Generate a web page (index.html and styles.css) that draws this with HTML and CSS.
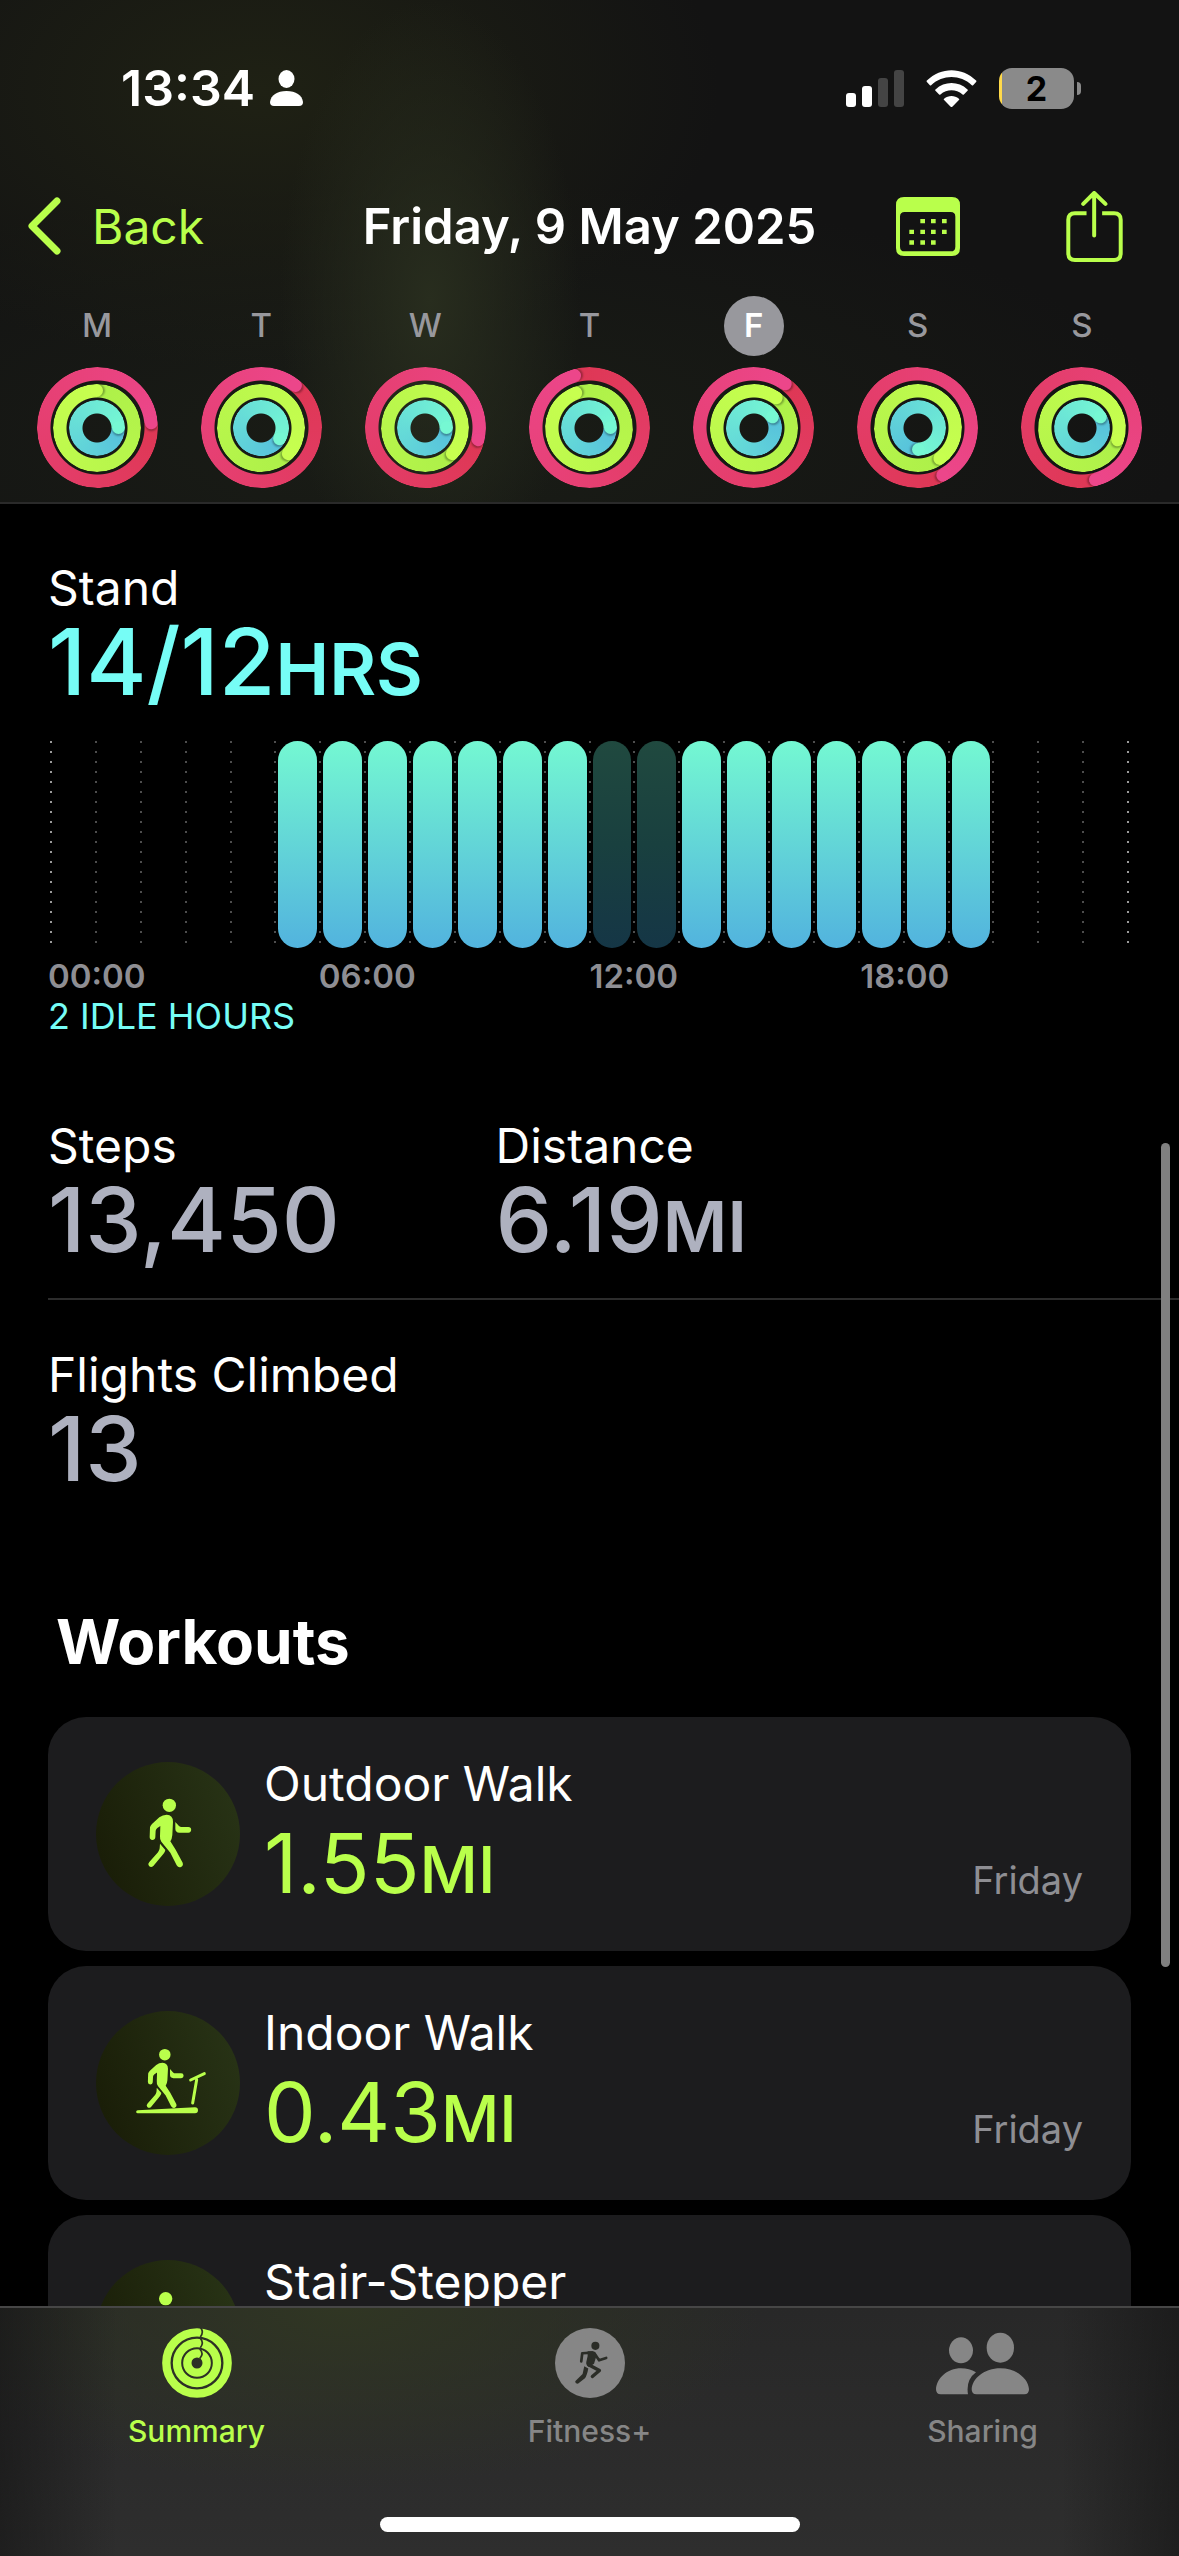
FILE: index.html
```html
<!DOCTYPE html>
<html lang="en-GB">
<head>
<meta charset="utf-8">
<meta name="viewport" content="width=device-width, initial-scale=1">
<title>Activity – Friday, 9 May 2025</title>
<link rel="stylesheet" href="styles.css">
</head>
<body>
<svg class="defs" aria-hidden="true">
  <symbol id="walker" viewBox="48 66 432 432">
    <circle cx="268" cy="196" r="20"/>
    <path d="M210 262Q211 257 216 252L238 232Q248 224 260 224Q279 225 279 245L277 285Q276 297 271 304L287 329L308 368Q311 377 303 381Q295 384 290 376L271 338L244 305Q239 298 240 288L241 258L232 264Q228 267 227 272L226 292Q225 300 217 300Q209 299 209 291Z"/>
    <path d="M240 311L256 330Q255 337 250 342L220 378Q213 384 207 378Q202 372 208 366L234 337Q238 332 239 325Z"/>
    <path d="M286 246L297 258Q300 261 305 261H325A8 8 0 0 1 325 278H298Q286 277 286 266Z"/>
  </symbol>
</svg>
<div class="app">
  <header class="header">
    <div class="status">
      <div class="status-left">
        <time>13:34</time>
        <svg class="person" viewBox="0 0 33 36" aria-hidden="true"><ellipse cx="16.500" cy="9" rx="8" ry="9"/><path d="M0 32C1 25 7 21 16.500 21S32 25 33 32Q33 36 29 36H4Q0 36 0 32Z"/></svg>
      </div>
      <div class="status-right">
        <svg class="signal" viewBox="0 0 58 37" aria-label="Signal: 2 bars"><rect y="23" width="10" height="14" rx="3"/><rect x="16" y="16" width="10" height="21" rx="3"/><g class="off"><rect x="32" y="8" width="10" height="29" rx="3"/><rect x="48" width="10" height="37" rx="3"/></g></svg>
        <svg class="wifi" viewBox="438 86 153 112" aria-label="Wi-Fi"><path d="M440 118C483 76 546 76 589 118Q591 120 589 122L580 132Q578 134 576 132C541 99 488 99 453 132Q451 134 449 132L440 122Q438 120 440 118ZM466 145C494 119 535 119 563 145Q565 147 563 149L552 160Q550 162 548 160C528 143 501 143 481 160Q479 162 477 160L466 149Q464 147 466 145ZM492 173C505 162 524 162 537 173Q539 175 537 177L517 197Q514 199 512 197L492 177Q490 175 492 173Z"/></svg>
        <div class="battery"><span>2</span></div>
      </div>
    </div>
    <nav class="nav">
      <a class="back" href="#summary"><svg class="chevron" viewBox="0 0 34 58" aria-hidden="true"><path d="M29 4L4 29L29 54"/></svg>Back</a>
      <h1>Friday, 9 May 2025</h1>
      <div class="actions">
        <button type="button" aria-label="Calendar"><svg class="calendar" viewBox="348 471 192 177"><path fill-rule="evenodd" d="M372 471H516Q540 471 540 495V624Q540 648 516 648H372Q348 648 348 624V495Q348 471 372 471ZM374 516Q360 516 360 530V620Q360 634 374 634H512Q526 634 526 620V530Q526 516 512 516Z"/><path d="M421 537h14v13h-14zM453 537h14v13h-14zM486 537h14v13h-14zM388 569h14v13h-14zM421 569h14v13h-14zM453 569h14v13h-14zM486 569h14v13h-14zM388 601h14v13h-14zM421 601h14v13h-14zM453 601h14v13h-14z"/></svg></button>
        <button type="button" aria-label="Share"><svg class="share" viewBox="858 449 170 214"><path d="M919 516H884Q864 516 864 536V636Q864 657 884 657H1002Q1022 657 1022 636V536Q1022 516 1002 516H966"/><path class="arrow" d="M942 583V456M909 488L942 455L976 488"/></svg></button>
      </div>
    </nav>
    <ol class="week">
      <li><span class="day">M</span><div class="rings"><i class="ring move" style="--end:85deg"></i><i class="ring exercise" style="--end:0deg"></i><i class="ring stand" style="--end:90deg"></i></div></li>
      <li><span class="day">T</span><div class="rings"><i class="ring move" style="--end:39deg"></i><i class="ring exercise" style="--end:134deg"></i><i class="ring stand" style="--end:121deg"></i></div></li>
      <li><span class="day">W</span><div class="rings"><i class="ring move" style="--end:103deg"></i><i class="ring exercise" style="--end:134deg"></i><i class="ring stand" style="--end:90deg"></i></div></li>
      <li><span class="day">T</span><div class="rings"><i class="ring move" style="--end:344deg"></i><i class="ring exercise" style="--end:340deg"></i><i class="ring stand" style="--end:90deg"></i></div></li>
      <li><span class="day current" aria-current="date">F</span><div class="rings"><i class="ring move" style="--end:36deg"></i><i class="ring exercise" style="--end:37deg"></i><i class="ring stand" style="--end:60deg"></i></div></li>
      <li><span class="day">S</span><div class="rings"><i class="ring move" style="--end:152deg"></i><i class="ring exercise" style="--end:145deg"></i><i class="ring stand" style="--end:180deg"></i></div></li>
      <li><span class="day">S</span><div class="rings"><i class="ring move" style="--end:165deg"></i><i class="ring exercise" style="--end:109deg"></i><i class="ring stand" style="--end:60deg"></i></div></li>
    </ol>
  </header>

  <main class="content">
    <section class="stand-section">
      <h2 class="label">Stand</h2>
      <p class="value cyan">14/12<span class="unit">HRS</span></p>
      <div class="chart" role="img" aria-label="Stand hours through the day">
        <i></i><i></i><i></i><i></i><i></i><i class="on"></i>
        <i class="on"></i><i class="on"></i><i class="on"></i><i class="on"></i><i class="on"></i><i class="on"></i>
        <i class="idle"></i><i class="idle"></i><i class="on"></i><i class="on"></i><i class="on"></i><i class="on"></i>
        <i class="on"></i><i class="on"></i><i class="on"></i><i></i><i></i><i></i>
      </div>
      <div class="hours"><span>00:00</span><span>06:00</span><span>12:00</span><span>18:00</span></div>
      <p class="idle-note">2 IDLE HOURS</p>
    </section>

    <section class="stats">
      <div class="stat-row">
        <div><h2 class="label">Steps</h2><p class="value">13,450</p></div>
        <div><h2 class="label">Distance</h2><p class="value">6.19<span class="unit">MI</span></p></div>
      </div>
      <div class="stat-row">
        <div><h2 class="label">Flights Climbed</h2><p class="value">13</p></div>
      </div>
    </section>

    <section class="workouts">
      <h2>Workouts</h2>
      <a class="card" href="#outdoor-walk">
        <svg class="badge" viewBox="48 66 432 432" aria-hidden="true"><use href="#walker" x="48" y="66" width="432" height="432"/></svg>
        <div class="card-text"><h3 class="label">Outdoor Walk</h3><p class="value">1.55<span class="unit">MI</span></p></div>
        <span class="when">Friday</span>
      </a>
      <a class="card" href="#indoor-walk">
        <svg class="badge" viewBox="48 66 432 432" aria-hidden="true"><use href="#walker" x="65" y="85" width="372" height="372"/><path d="M173 364L345 355A9 9 0 0 1 345 373H173A4 4 0 0 1 173 364Z"/><path class="rail" d="M332 273L373 254M350 272L338 342"/></svg>
        <div class="card-text"><h3 class="label">Indoor Walk</h3><p class="value">0.43<span class="unit">MI</span></p></div>
        <span class="when">Friday</span>
      </a>
      <a class="card" href="#stair-stepper">
        <svg class="badge" viewBox="48 66 432 432" aria-hidden="true"><circle cx="257" cy="182" r="20"/></svg>
        <div class="card-text"><h3 class="label">Stair-Stepper</h3></div>
      </a>
    </section>
    <div class="scrollbar"></div>
  </main>

  <footer class="tabbar">
    <nav class="tabs">
      <a class="tab active" href="#summary"><svg class="round" viewBox="123 114 210 210" aria-hidden="true"><g class="loops"><circle cx="228" cy="219" r="92"/><circle cx="228" cy="219" r="60"/><circle cx="228" cy="219" r="29"/></g><g class="gaps"><path d="M238 112Q250 126 238 141"/><path d="M238 145Q250 158 238 173"/><path d="M236 177Q250 190 236 206"/></g></svg>Summary</a>
      <a class="tab" href="#fitness"><svg class="round" viewBox="39 37 208 208" aria-hidden="true"><circle cx="143" cy="141" r="104"/><g class="runner"><circle cx="159" cy="90" r="12"/><path d="M117 136L120 112L150 110M156 112L170 133L191 126" stroke-width="8"/><path d="M136 106H152Q162 110 162 120L155 143L140 153Q130 147 132 138L136 120Z"/><path d="M139 146L171 163L150 181" stroke-width="10"/><path d="M126 151L138 157Q134 178 128 186L108 202Q99 204 99 195L121 174Z"/></g></svg>Fitness+</a>
      <a class="tab" href="#sharing"><svg class="people" viewBox="1185 34 279 210" aria-hidden="true"><ellipse cx="1260" cy="101" rx="36" ry="39"/><ellipse cx="1378" cy="93" rx="41" ry="45"/><path d="M1185 218C1187 185 1218 155 1260 155Q1285 155 1305 167Q1274 190 1281 233H1199Q1185 233 1185 218ZM1292 218C1294 185 1330 155 1378 155S1462 185 1464 218Q1464 233 1450 233H1306Q1292 233 1292 218Z"/></svg>Sharing</a>
    </nav>
    <div class="home"></div>
  </footer>
</div>
</body>
</html>
```
FILE: styles.css
```css
:root {
  --lime: #b9ff4b;
  --cyan: #76fdf6;
  --grey: #8e8e93;
}

* { box-sizing: border-box; margin: 0; padding: 0; }

body {
  background: #000;
  color: #fff;
  font-family: Inter, "Liberation Sans", sans-serif;
  font-size: 48px;
}

a { color: inherit; text-decoration: none; }
button { border: 0; background: none; color: inherit; display: flex; }
svg { display: block; flex: none; fill: currentColor; }
.defs { position: absolute; width: 0; height: 0; }

.app { display: flex; flex-direction: column; height: 100vh; }

/* Header */
.header {
  flex: none;
  padding: 56px 0 14px;
  border-bottom: 2px solid #2a2a2a;
  background:
    radial-gradient(ellipse 150px 300px at 430px 300px, #282d1e 0, transparent 100%),
    radial-gradient(ellipse 460px 280px at 260px 90px, #1f2114 0, transparent 100%),
    radial-gradient(ellipse 760px 260px at 420px 440px, #1a1d16 0, transparent 100%),
    #131313;
}

.status {
  display: flex;
  justify-content: space-between;
  height: 64px;
  padding: 0 105px 0 121px;
}
.status-left, .status-right { display: flex; align-items: center; }
.status-left { gap: 15px; font-size: 50px; font-weight: 600; }
.status-right { gap: 22px; }
.person { width: 33px; height: 36px; }
.signal { width: 58px; height: 37px; }
.signal .off { fill: #444; }
.wifi { width: 51px; height: 37px; }
.battery {
  position: relative;
  width: 75px;
  height: 41px;
  border-radius: 13px;
  background: linear-gradient(to right, #ffd94a 3px, #8a8a8a 3px);
  color: #000;
  font-size: 34px;
  font-weight: 700;
  line-height: 41px;
  text-align: center;
}
.battery::after {
  content: "";
  position: absolute;
  left: 78px;
  top: 14px;
  width: 4px;
  height: 13px;
  border-radius: 0 4px 4px 0;
  background: #8a8a8a;
}

.nav {
  display: grid;
  grid-template-columns: 1fr auto 1fr;
  align-items: center;
  height: 72px;
  margin-top: 70px;
  padding: 0 28px;
}
.nav h1 { font-size: 49px; font-weight: 600; }
.back { display: flex; align-items: center; gap: 30px; color: var(--lime); }
.chevron { width: 34px; height: 58px; fill: none; stroke: currentColor; stroke-width: 7; stroke-linecap: round; stroke-linejoin: round; }
.actions { display: flex; align-items: center; justify-content: flex-end; gap: 106px; padding-right: 28px; color: var(--lime); }
.calendar { width: 64px; height: 59px; }
.share { width: 57px; height: 71px; fill: none; stroke: currentColor; stroke-width: 12; }
.share .arrow { stroke-linecap: round; stroke-linejoin: round; }

.week {
  display: grid;
  grid-template-columns: repeat(7, 1fr);
  margin-top: 34px;
  padding: 0 15px;
  list-style: none;
}
.week li { display: flex; flex-direction: column; align-items: center; gap: 11px; }
.day {
  width: 60px;
  height: 60px;
  border-radius: 50%;
  color: #98989d;
  font-size: 33px;
  font-weight: 500;
  line-height: 58px;
  text-align: center;
}
.day.current { background: #98989d; color: #fff; font-weight: 600; }

.rings { display: grid; width: 121px; height: 121px; place-items: center; }
.ring {
  grid-area: 1 / 1;
  position: relative;
  border-radius: 50%;
  background: conic-gradient(var(--from), var(--to));
  transform: rotate(var(--end));
  mask: radial-gradient(closest-side, transparent calc(100% - 14px), #000 calc(100% - 13px));
}
.ring::before {
  content: "";
  position: absolute;
  top: 0;
  left: calc(50% - 7px);
  width: 13px;
  height: 13px;
  border-radius: 50%;
  background: var(--to);
  box-shadow: 2px 0 2px rgba(0, 0, 0, .3);
}
.move { --from: #de3754; --to: #ec468a; width: 121px; height: 121px; }
.exercise { --from: #adf049; --to: #c7ff4f; width: 88px; height: 88px; }
.ring.stand { --from: #56c0dc; --to: #76f8d3; width: 56px; height: 56px; }

/* Scrolling content */
.content { position: relative; flex: 1; min-height: 0; overflow: hidden; padding-top: 54px; }

.label { font-size: 48px; font-weight: 400; line-height: 60px; }
.value { color: #aeb1bf; font-size: 90px; font-weight: 500; line-height: 87px; }
.unit { font-size: 70px; font-weight: 600; line-height: 0; }
.value.cyan { color: var(--cyan); font-size: 92px; }
.cyan .unit { font-size: 72px; }

.stand-section { padding: 0 48px; }
.chart { display: grid; grid-template-columns: repeat(24, 1fr); height: 207px; margin-top: 36px; padding: 0 4px 0 2px; }
.chart i {
  position: relative;
  background: repeating-linear-gradient(to bottom, #4d4d4d 0 2px, transparent 2px 10px) left / 2px 100% no-repeat;
}
.chart i:first-child, .chart i:last-child::after {
  background: repeating-linear-gradient(to bottom, #9a9a9a 0 2px, transparent 2px 10px) left / 2px 100% no-repeat;
}
.chart i:last-child::after { content: ""; position: absolute; left: 100%; width: 2px; height: 100%; }
.chart .on::before, .chart .idle::before {
  content: "";
  display: block;
  height: 100%;
  margin: 0 2px 0 4px;
  border-radius: 20px;
  background: linear-gradient(#74f8d2, #66dcd6 40%, #52b3de);
}
.chart .idle::before { background: linear-gradient(#20493f, #19403f 50%, #153646); }
.hours {
  display: grid;
  grid-template-columns: repeat(4, 1fr);
  margin-top: 8px;
  color: var(--grey);
  font-size: 33px;
  font-weight: 600;
  line-height: 40px;
}
.idle-note { color: var(--cyan); font-size: 36px; line-height: 40px; }

.stats { margin-top: 80px; padding-left: 48px; }
.stat-row { display: grid; grid-template-columns: 2fr 3fr; padding-right: 12px; }
.stat-row + .stat-row { margin-top: 35px; padding-top: 45px; border-top: 2px solid #2c2c2c; }

.workouts { display: flex; flex-direction: column; gap: 15px; margin-top: 110px; padding: 0 48px; }
.workouts h2 { margin-bottom: 20px; padding-left: 8px; font-size: 62px; font-weight: 700; line-height: 80px; }
.card {
  display: flex;
  align-items: center;
  gap: 24px;
  min-height: 234px;
  padding: 37px 48px;
  border-radius: 38px;
  background: #1c1c1e;
}
.badge {
  width: 144px;
  height: 144px;
  border-radius: 50%;
  background: linear-gradient(70deg, #181b06, #293517);
  color: var(--lime);
}
.badge .rail { fill: none; stroke: currentColor; stroke-width: 9; stroke-linecap: round; }
.card-text { flex: 1; min-height: 160px; }
.card .value { color: var(--lime); font-size: 82px; font-weight: 400; line-height: 100px; }
.card .unit { font-size: 64px; font-weight: 500; }
.when { align-self: flex-end; margin-bottom: 10px; color: var(--grey); font-size: 38px; line-height: 48px; }

.scrollbar {
  position: absolute;
  top: 639px;
  right: 9px;
  width: 9px;
  height: 824px;
  border-radius: 5px;
  background: #808080;
}

/* Tab bar */
.tabbar {
  flex: none;
  padding-bottom: 24px;
  border-top: 2px solid #464646;
  background:
    linear-gradient(to right, rgba(20, 20, 20, .6), transparent 10%, transparent 90%, rgba(20, 20, 20, .6)),
    radial-gradient(ellipse 420px 180px at 340px 0, #303623 0, transparent 100%),
    linear-gradient(#282828, #2e2e2e);
}
.tabs { display: grid; grid-template-columns: repeat(3, 1fr); padding-top: 20px; }
.tab {
  display: flex;
  flex-direction: column;
  align-items: center;
  gap: 15px;
  color: #868686;
  font-size: 30px;
  font-weight: 500;
  line-height: 36px;
}
.tab.active { color: var(--lime); }
.round { width: 70px; height: 70px; }
.people { width: 93px; height: 70px; }
.loops { fill: none; stroke: currentColor; stroke-width: 25; }
.gaps { fill: none; stroke: #2d3223; stroke-width: 5; }
.runner { fill: #2b2d27; }
.runner path[stroke-width] { fill: none; stroke: #2b2d27; stroke-linecap: round; stroke-linejoin: round; }
.home { width: 420px; height: 15px; margin: 68px auto 0; border-radius: 8px; background: #fff; }
```
